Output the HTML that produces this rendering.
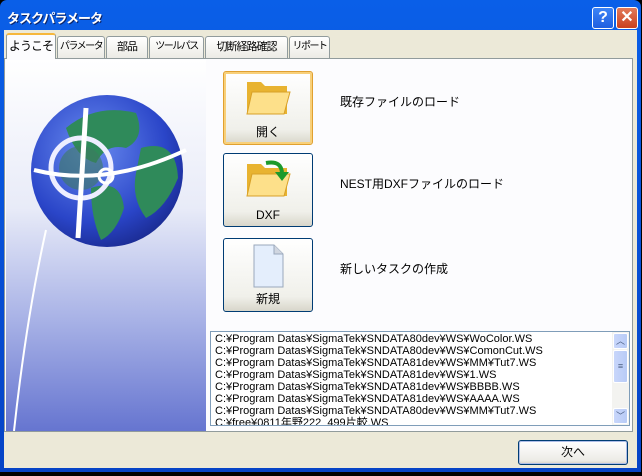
<!DOCTYPE html><html><head><meta charset="utf-8"><style>
*{margin:0;padding:0;box-sizing:border-box}
body{width:642px;height:476px;background:#000;position:relative;overflow:hidden;font-family:"Liberation Sans","Noto Sans CJK JP",sans-serif;font-size:12px;color:#000}
.win{position:absolute;left:0;top:0;width:641px;height:472px;background:linear-gradient(#0a5fe8,#0543c6);border-radius:7px 7px 0 0}
.title{position:absolute;left:7px;top:8px;color:#fff;font-weight:bold;font-size:13px;text-shadow:1px 1px #0a246a;letter-spacing:-1px}
.body{position:absolute;left:4px;top:30px;width:633px;height:438px;background:#ece9d8}
.tb{position:absolute;top:0;width:22px;height:22px;border:1px solid #fff;border-radius:3px;color:#fff;font-weight:bold;text-align:center;line-height:20px;font-size:16px}
.tab{position:absolute;top:6px;height:22px;border:1px solid #919b9c;border-bottom:none;background:linear-gradient(#fff,#ecebe5);font-size:11px;text-align:center;line-height:20px;border-radius:3px 3px 0 0;white-space:nowrap;overflow:hidden;letter-spacing:-1px}
.panel{position:absolute;left:0;top:28px;width:629px;height:374px;background:#fcfcfe;border:1px solid #919b9c}
.left{position:absolute;left:1px;top:1px;width:200px;height:371px;background:linear-gradient(#fff 0%,#e8ebf8 40%,#a8b2e6 70%,#6675d0 100%)}
.btn{position:absolute;left:218px;width:90px;height:74px;border:1px solid #003c74;border-radius:3px;background:linear-gradient(#fff,#f0f0ea 80%,#d8d6ca);text-align:center}
.btn span{position:absolute;bottom:4px;left:0;right:0}
.lbl{position:absolute;left:335px;font-size:12px}
.list{position:absolute;left:205px;top:272px;width:420px;height:95px;border:1px solid #7f9db9;background:#fff;overflow:hidden;font-size:11px;line-height:12px;padding:1px 4px}
.sb{position:absolute;right:0;top:0;width:17px;height:93px;background:#f3f3f0}
.sbb{position:absolute;left:1px;width:15px;height:16px;background:linear-gradient(90deg,#c8d6fb,#b8cbf6);border:1px solid #fff;border-radius:2px;color:#4d6185;font-size:9px;text-align:center;line-height:14px}
.next{position:absolute;left:514px;top:410px;width:110px;height:25px;border:1px solid #003c74;border-radius:3px;background:linear-gradient(#fff,#ecebe6 85%,#d6d0c5);text-align:center;line-height:22px;box-shadow:inset 0 0 0 1px #aebee8}
</style></head><body>
<div class="win">
<div class="title">タスクパラメータ</div>
<div class="tb" style="left:592px;top:7px;background:linear-gradient(#3d84f6,#1f5fe0)">?</div>
<div class="tb" style="left:616px;top:7px;background:linear-gradient(#e27a5a,#c9401e)">✕</div>
<div class="body">
<div class="tab" style="left:2px;top:3px;height:26px;width:50px;font-size:12px;background:#fcfcfe;border-top:2px solid #f6b73c;z-index:2;line-height:22px">ようこそ</div>
<div class="tab" style="left:53px;width:48px;font-size:10px;letter-spacing:-1.5px">パラメータ</div>
<div class="tab" style="left:102px;width:42px">部品</div>
<div class="tab" style="left:145px;width:55px;font-size:10px;letter-spacing:-1.5px">ツールパス</div>
<div class="tab" style="left:201px;width:83px;font-size:11px">切断経路確認</div>
<div class="tab" style="left:285px;width:41px;font-size:10px;letter-spacing:-1.5px">リポート</div>
<div class="panel">
<div class="left">
<svg width="200" height="371" viewBox="0 0 200 371">
<defs><radialGradient id="g" cx="0.4" cy="0.35" r="0.7"><stop offset="0" stop-color="#6a8cf0"/><stop offset="0.7" stop-color="#2a45c8"/><stop offset="1" stop-color="#1a2a90"/></radialGradient></defs>
<path d="M40 170 Q20 260 8 371" stroke="#fff" stroke-width="2" fill="none"/>
<circle cx="101" cy="111" r="76" fill="url(#g)"/>
<path d="M60 68 Q90 43 130 53 Q140 78 120 88 Q100 83 90 103 Q70 98 60 68Z" fill="#2f8a5a"/>
<path d="M135 88 Q170 78 172 118 Q160 148 140 158 Q125 138 130 113Z" fill="#2f8a5a"/>
<path d="M85 128 Q115 118 118 148 Q110 173 95 180 Q85 158 85 128Z" fill="#2f8a5a"/>
<circle cx="75" cy="108" r="30" fill="none" stroke="#eef" stroke-width="5"/>
<circle cx="75" cy="108" r="22" fill="#3d7a60" opacity=".6"/>
<path d="M80 48 L72 178" stroke="#fff" stroke-width="5"/>
<path d="M28 110 Q100 128 180 90" stroke="#fff" stroke-width="4" fill="none"/>
<circle cx="100" cy="116" r="7" fill="none" stroke="#fff" stroke-width="3"/>
</svg>
</div>
<div class="btn" style="top:12px;border-color:#e0a030;box-shadow:inset 0 0 0 2px #f8d07a">
<svg width="48" height="44" style="margin-top:4px" viewBox="0 0 48 44"><path d="M3 6h14l4 4h22v28H3z" fill="#e8b330"/><path d="M8 16h38l-6 22H3z" fill="#fde08a" stroke="#d8a028"/></svg><span>開く</span></div>
<div class="btn" style="top:94px"><svg width="48" height="44" style="margin-top:4px" viewBox="0 0 48 44"><path d="M3 6h14l4 4h22v28H3z" fill="#e8b330"/><path d="M8 16h38l-6 22H3z" fill="#fde08a" stroke="#d8a028"/><path d="M22 5 Q38 2 38 16" stroke="#1c9a2c" stroke-width="4" fill="none"/><path d="M31 14h14l-7 9z" fill="#1c9a2c"/></svg><span>DXF</span></div>
<div class="btn" style="top:179px"><svg width="40" height="46" style="margin-top:4px" viewBox="0 0 40 46"><path d="M6 2h20l9 9v33H6z" fill="#e4eefc" stroke="#9aa8bc"/><path d="M26 2v9h9" fill="#d0d6e0" stroke="#9aa8bc"/></svg><span>新規</span></div>
<div class="lbl" style="top:34px">既存ファイルのロード</div>
<div class="lbl" style="top:116px">NEST用DXFファイルのロード</div>
<div class="lbl" style="top:201px">新しいタスクの作成</div>
<div class="list">C:¥Program Datas¥SigmaTek¥SNDATA80dev¥WS¥WoColor.WS<br>C:¥Program Datas¥SigmaTek¥SNDATA80dev¥WS¥ComonCut.WS<br>C:¥Program Datas¥SigmaTek¥SNDATA81dev¥WS¥MM¥Tut7.WS<br>C:¥Program Datas¥SigmaTek¥SNDATA81dev¥WS¥1.WS<br>C:¥Program Datas¥SigmaTek¥SNDATA81dev¥WS¥BBBB.WS<br>C:¥Program Datas¥SigmaTek¥SNDATA81dev¥WS¥AAAA.WS<br>C:¥Program Datas¥SigmaTek¥SNDATA80dev¥WS¥MM¥Tut7.WS<br>C:¥free¥0811年野222_499片較.WS
<div class="sb"><div class="sbb" style="top:1px">︿</div><div class="sbb" style="top:18px;height:33px;line-height:30px">≡</div><div class="sbb" style="top:76px">﹀</div></div></div>
</div>
<div class="next">次へ</div>
</div></div>
</body></html>
